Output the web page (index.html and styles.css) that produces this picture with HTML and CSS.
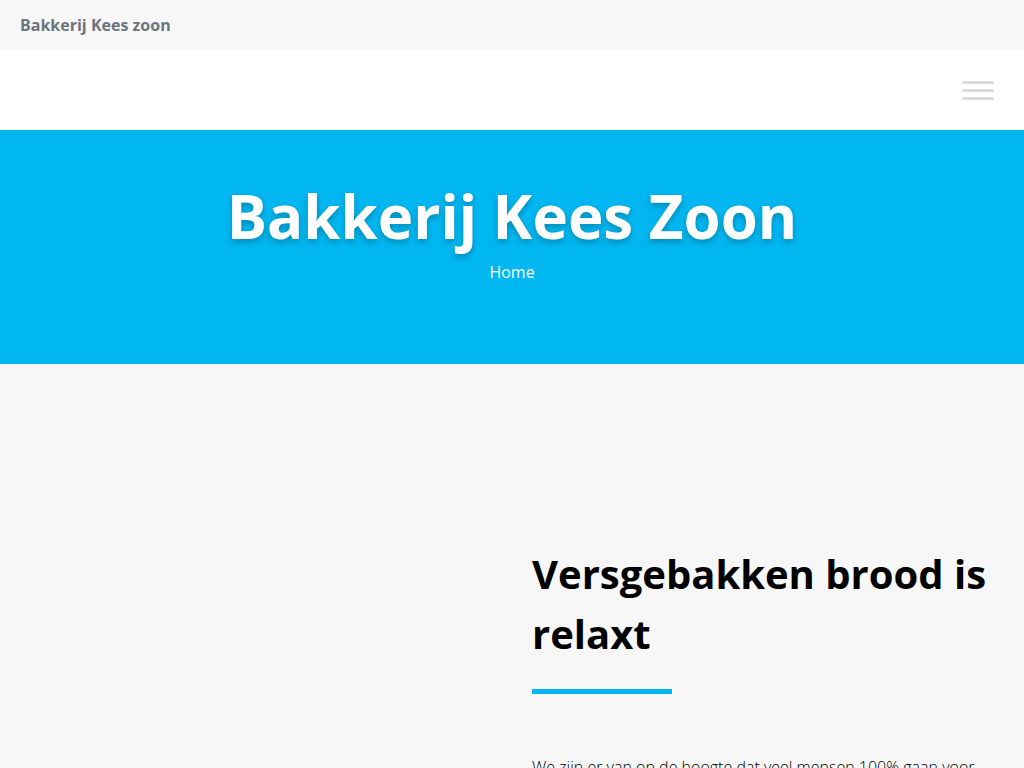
FILE: index.html
```html
<!DOCTYPE html>
<html lang="nl">
<head>
<meta charset="utf-8">
<title>Bakkerij Kees zoon</title>
<link rel="stylesheet" href="styles.css">
</head>
<body>
<header class="topbar">
  <span class="brand">Bakkerij Kees zoon</span>
</header>
<nav class="navbar">
  <button class="menu-toggle" aria-label="Menu">
    <span></span><span></span><span></span>
  </button>
</nav>
<section class="hero">
  <h1 class="hero-title">Bakkerij Kees Zoon</h1>
  <div class="crumb">Home</div>
</section>
<main class="content">
  <div class="col-left"></div>
  <div class="col-right">
    <h2 class="section-title">Versgebakken brood is relaxt</h2>
    <div class="divider"></div>
    <p class="intro">We zijn er van op de hoogte dat veel mensen 100% gaan voor versgebakken brood.</p>
  </div>
</main>
</body>
</html>
```
FILE: styles.css
```css
* { box-sizing: border-box; }
html, body { margin: 0; padding: 0; }
body {
  font-family: "Open Sans", "Noto Sans", sans-serif;
  background: #f7f7f7;
  color: #000;
}
.topbar {
  height: 50px;
  background: #f7f7f7;
  display: flex;
  align-items: center;
  padding: 0 20px;
}
.brand {
  font-weight: 700;
  font-size: 16px;
  color: #6c757d;
}
.navbar {
  height: 80px;
  background: #fff;
  display: flex;
  justify-content: flex-end;
  align-items: center;
  padding: 0 30px;
}
.menu-toggle {
  border: 0;
  background: none;
  padding: 0;
  width: 32px;
  display: flex;
  flex-direction: column;
  gap: 5px;
  cursor: pointer;
}
.menu-toggle span {
  display: block;
  height: 3px;
  width: 32px;
  background: #dcdcdc;
  border-radius: 2px;
}
.hero {
  height: 234px;
  background: #00b7f1;
  text-align: center;
  color: #fff;
  padding-top: 46px;
}
.hero-title {
  margin: 0;
  font-size: 60px;
  line-height: 80px;
  font-weight: 700;
  text-shadow: 0 3px 6px rgba(0, 0, 0, 0.25);
}
.crumb {
  margin-top: 4px;
  font-size: 16px;
  font-weight: 400;
  line-height: 24px;
}
.content {
  display: grid;
  grid-template-columns: 1fr 1fr;
  padding-top: 180px;
}
.col-right {
  padding: 0 20px;
}
.section-title {
  margin: 0;
  font-size: 40px;
  line-height: 60px;
  font-weight: 700;
  color: #000;
}
.divider {
  width: 140px;
  height: 5px;
  background: #00b7f1;
  margin-top: 25px;
}
.intro {
  margin: 59px 0 0;
  font-size: 16px;
  font-weight: 300;
  line-height: 28px;
}
```
